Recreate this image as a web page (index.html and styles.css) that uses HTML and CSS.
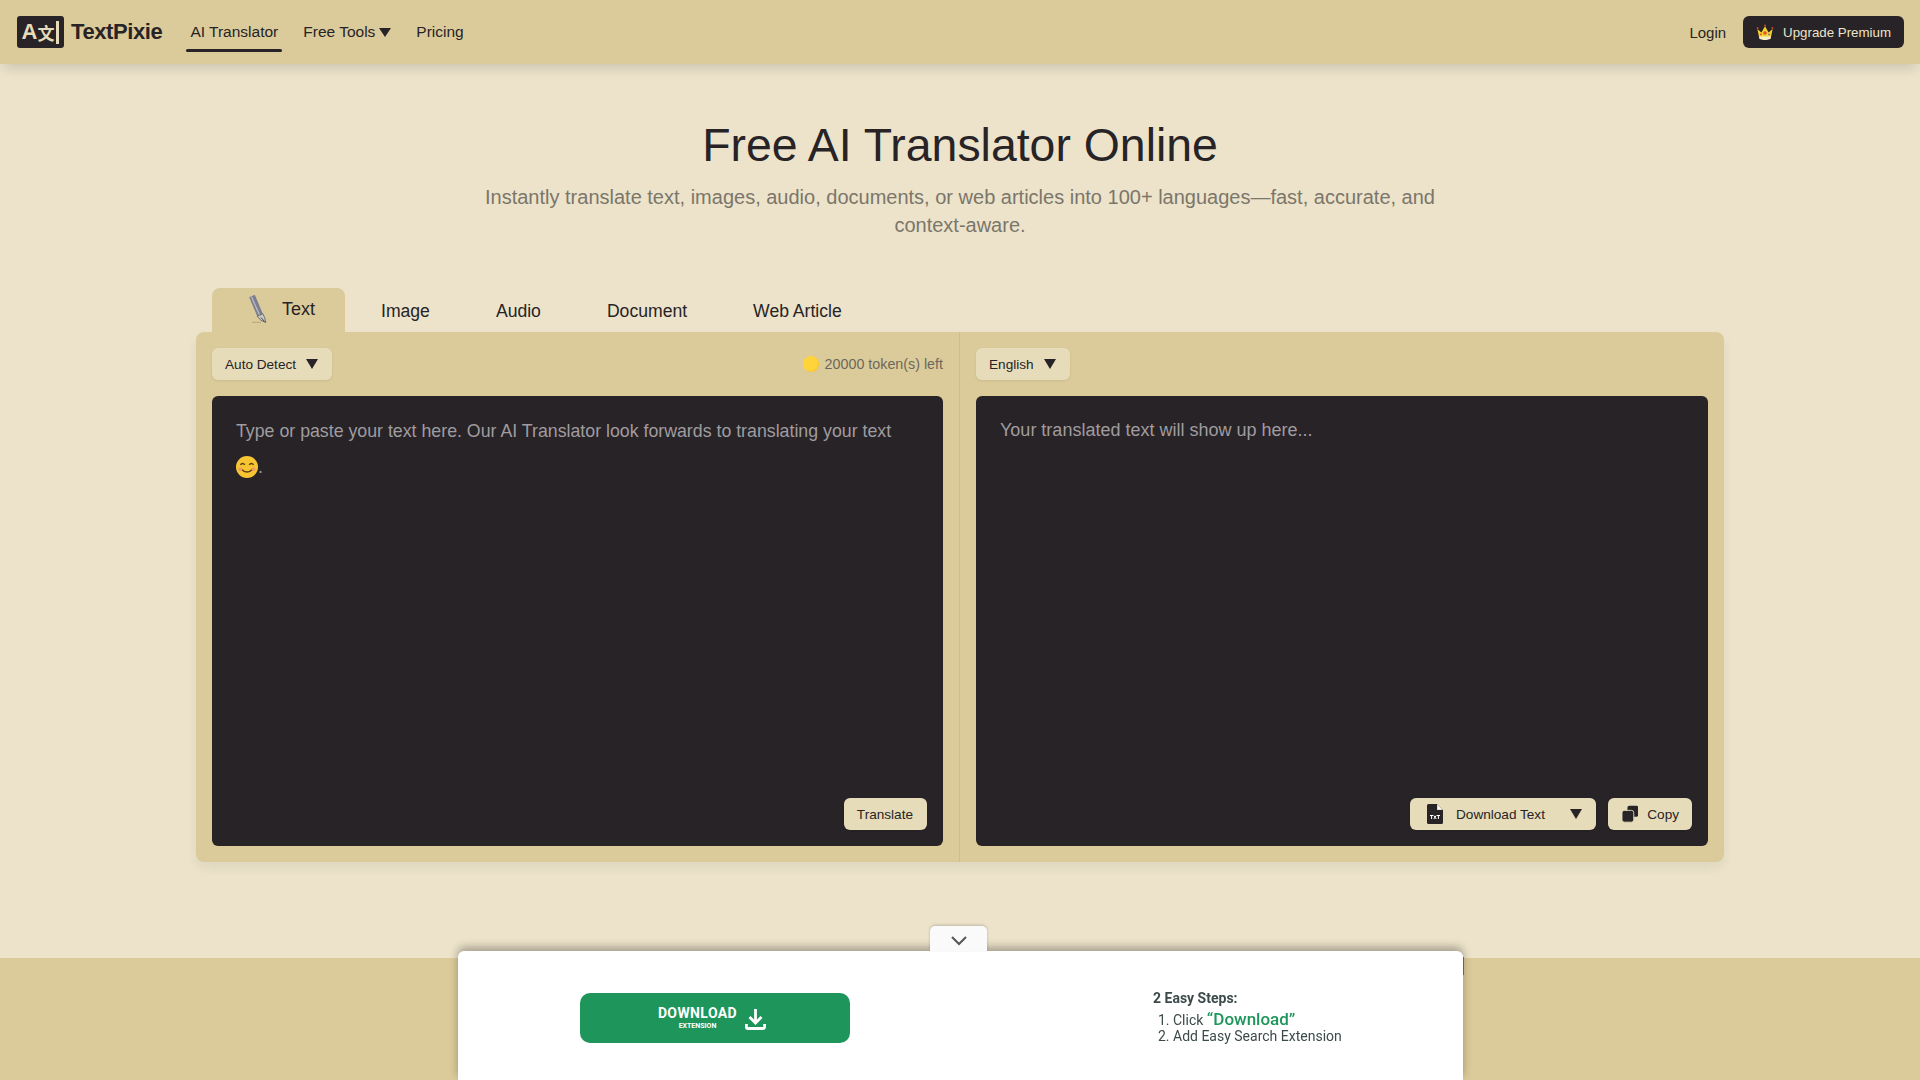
FILE: index.html
```html
<!DOCTYPE html>
<html lang="en">
<head>
    <meta charset="UTF-8">
    <meta name="viewport" content="width=device-width, initial-scale=1.0">
    <title>Free AI Translator Online</title>
    <link rel="stylesheet" href="styles.css">
</head>
<body>
    <header class="topbar">
        <a class="logo" href="#">
            <span class="logo-mark"><span class="logo-a">A</span><span class="logo-zh">文</span><span class="logo-bar"></span></span>
            <span class="logo-name">TextPixie</span>
        </a>
        <nav class="nav">
            <a class="nav-link active" href="#">AI Translator</a>
            <a class="nav-link" href="#">Free Tools <svg class="caret-small" viewBox="0 0 12 9"><path d="M0 0h12L6 9z"/></svg></a>
            <a class="nav-link" href="#">Pricing</a>
        </nav>
        <a class="login" href="#">Login</a>
        <button class="upgrade" type="button">
            <svg class="crown" viewBox="0 0 20 18">
                <path d="M1.500 5l4.500 4 4-7 4 7 4.500-4-2 9.500h-13z" fill="#f8d030"/>
                <path d="M3.500 13.500h13v2.200c-3 2.200-10 2.200-13 0z" fill="#f5edc8"/>
                <circle cx="10" cy="9.500" r="2" fill="#e0542c"/>
                <circle cx="5.500" cy="11" r="1" fill="#c8452c"/>
                <circle cx="14.500" cy="11" r="1" fill="#3f7fc4"/>
                <circle cx="1.800" cy="4" r="1.100" fill="#c8452c"/>
                <circle cx="10" cy="1.300" r="1.100" fill="#c8452c"/>
                <circle cx="18.200" cy="4" r="1.100" fill="#c8452c"/>
            </svg>
            Upgrade Premium
        </button>
    </header>

    <main class="content">
        <h1>Free AI Translator Online</h1>
        <p class="lead">Instantly translate text, images, audio, documents, or web articles into 100+ languages—fast, accurate, and context-aware.</p>

        <div class="translator">
            <div class="tabs">
                <a class="tab tab-active" href="#">
                    <svg class="pen" viewBox="0 0 18 28">
                        <path d="M.2 2.200L5.800-.2l8 19-5.600 2.400z" fill="#7b7e8e"/>
                        <path d="M2.500 1.800l8 18.300" stroke="#b9bbc6" stroke-width="1.300"/>
                        <path d="M8.200 21.200l5.600-2.400 2 4 .9 4.700-5-2.400z" fill="#c9cac6" stroke="#55565a" stroke-width=".8"/>
                        <path d="M12 22.500l3.500 4" stroke="#3c3d40" stroke-width=".9"/>
                        <path d="M3 27.300h9" stroke="#b3a67f" stroke-width="1"/>
                    </svg>
                    Text
                </a>
                <a class="tab" href="#">Image</a>
                <a class="tab" href="#">Audio</a>
                <a class="tab" href="#">Document</a>
                <a class="tab" href="#">Web Article</a>
            </div>
            <div class="panel">
                <section class="side side-left">
                    <div class="side-top">
                        <button class="pill" type="button">Auto Detect <svg class="caret" viewBox="0 0 12 10"><path d="M0 0h12L6 10z"/></svg></button>
                        <span class="tokens"><span class="coin"></span>20000 token(s) left</span>
                    </div>
                    <div class="box">
                        <p class="placeholder placeholder-in">Type or paste your text here. Our AI Translator look forwards to translating your text
                            <span class="smile-wrap"><svg class="smile" viewBox="0 0 20 20">
                                <circle cx="10" cy="10" r="10" fill="#f7c532"/>
                                <path d="M4 8q2-2.500 4 0M12 8q2-2.500 4 0" fill="none" stroke="#5a3d12" stroke-width="1.300"/>
                                <path d="M4.500 11.500q5.500 6 11 0" fill="none" stroke="#5a3d12" stroke-width="1.300"/>
                                <circle cx="4" cy="12" r="1.800" fill="#f29a5c"/>
                                <circle cx="16" cy="12" r="1.800" fill="#f29a5c"/>
                            </svg>.</span></p>
                        <div class="box-actions">
                            <button class="pill" type="button">Translate</button>
                        </div>
                    </div>
                </section>
                <section class="side">
                    <div class="side-top">
                        <button class="pill" type="button">English <svg class="caret" viewBox="0 0 12 10"><path d="M0 0h12L6 10z"/></svg></button>
                    </div>
                    <div class="box">
                        <p class="placeholder placeholder-out">Your translated text will show up here...</p>
                        <div class="box-actions">
                            <button class="pill pill-download" type="button">
                                <svg class="file-icon" viewBox="0 0 16 20">
                                    <path d="M1.500 0H10l6 6v12.500a1.500 1.500 0 0 1-1.500 1.500h-13A1.500 1.500 0 0 1 0 18.500v-17A1.500 1.500 0 0 1 1.500 0z" fill="#272326"/>
                                    <path d="M10 0v6h6z" fill="#e6dcb9"/>
                                    <path d="M11 1.500L14.500 5H11z" fill="#fff"/>
                                    <path d="M3 11.500h3.200M4.600 11.500v3.500M6.800 11.500l2.400 3.500M9.200 11.500l-2.400 3.500M9.800 11.500H13M11.400 11.500v3.500" stroke="#fff" stroke-width="1" fill="none"/>
                                </svg>
                                <span class="download-label">Download Text</span>
                                <svg class="caret" viewBox="0 0 12 10"><path d="M0 0h12L6 10z"/></svg>
                            </button>
                            <button class="pill pill-copy" type="button">
                                <svg class="copy-icon" viewBox="0 0 18 18">
                                    <rect x="6" y="0" width="12" height="12" rx="2" fill="#272326"/>
                                    <rect x="0" y="5" width="13" height="13" rx="2.500" fill="#272326" stroke="#e6dcb9" stroke-width="1"/>
                                </svg>
                                Copy
                            </button>
                        </div>
                    </div>
                </section>
            </div>
        </div>
    </main>

    <div class="footer-band"></div>

    <aside class="promo">
        <button class="promo-toggle" type="button">
            <svg viewBox="0 0 16 10"><path d="M1 1l7 7 7-7" fill="none" stroke="#555" stroke-width="2"/></svg>
        </button>
        <div class="promo-left">
            <a class="promo-btn" href="#">
                <span class="promo-btn-text"><b>DOWNLOAD</b><small>EXTENSION</small></span>
                <svg class="promo-icon" viewBox="0 0 21 21">
                    <path d="M10.500 0v13.500M4.500 8l6 6 6-6" fill="none" stroke="#fff" stroke-width="2.800"/>
                    <path d="M1.400 15v3a1.500 1.500 0 0 0 1.500 1.500h15.200a1.500 1.500 0 0 0 1.500-1.500v-3" fill="none" stroke="#fff" stroke-width="2.800"/>
                </svg>
            </a>
        </div>
        <div class="promo-right">
            <strong>2 Easy Steps:</strong>
            <ol>
                <li>Click <span class="green">“Download”</span></li>
                <li class="step-last">Add Easy Search Extension</li>
            </ol>
        </div>
    </aside>
</body>
</html>
```

FILE: styles.css
```css
* {
    box-sizing: border-box;
}
html, body {
    height: 100%;
}
body {
    font-family: 'Liberation Sans', Arial, sans-serif;
    background-color: #ece3ca;
    margin: 0;
    color: #272326;
    overflow: hidden;
    display: flex;
    flex-direction: column;
}
a {
    color: inherit;
    text-decoration: none;
}
button {
    font-family: inherit;
    border: none;
    cursor: pointer;
}

/* top bar */
.topbar {
    height: 64px;
    flex: none;
    display: flex;
    align-items: center;
    padding: 0 16px 0 17px;
    background-color: #dbcb9a;
    box-shadow: 0 8px 12px -4px rgba(0,0,0,0.14);
    position: relative;
}
.logo {
    display: flex;
    align-items: center;
    gap: 7px;
}
.logo-mark {
    width: 47px;
    height: 32px;
    background-color: #272326;
    border-radius: 3px;
    color: #e6dcb9;
    display: flex;
    align-items: center;
    justify-content: center;
    font-weight: 700;
}
.logo-a {
    font-size: 22px;
}
.logo-zh {
    font-family: 'Noto Sans CJK SC', sans-serif;
    font-size: 17px;
    line-height: 1;
}
.logo-bar {
    width: 3px;
    height: 23px;
    margin-left: 2px;
    background-color: #e6dcb9;
}
.logo-name {
    font-size: 22px;
    font-weight: 700;
    letter-spacing: -0.4px;
}
.nav {
    display: flex;
    margin-left: 24px;
    gap: 17px;
    flex: 1;
    height: 100%;
}
.nav-link {
    font-size: 15.5px;
    height: 100%;
    padding: 0 4px;
    display: flex;
    align-items: center;
    gap: 4px;
    position: relative;
}
.nav-link.active::after {
    content: "";
    position: absolute;
    left: 0;
    right: 0;
    bottom: 12px;
    height: 3px;
    border-radius: 2px;
    background-color: #272326;
}
.caret-small {
    width: 12px;
    height: 9px;
    fill: #272326;
}
.login {
    font-size: 15px;
    margin-right: 17px;
}
.upgrade {
    height: 32px;
    padding: 0 13px;
    border-radius: 6px;
    background-color: #272326;
    color: #ece3ca;
    font-size: 13.3px;
    display: flex;
    align-items: center;
    gap: 9px;
}
.crown {
    width: 18px;
    height: 17px;
}

/* heading */
.content {
    flex: 1;
    text-align: center;
    padding-top: 53px;
}
h1 {
    margin: 0;
    font-size: 46.4px;
    line-height: 56px;
    font-weight: 400;
}
.lead {
    width: 1000px;
    margin: 10px auto 0;
    font-size: 20px;
    line-height: 28px;
    color: #7b766a;
}

/* translator */
.translator {
    width: 1528px;
    margin: 49px auto 0;
    text-align: left;
}
.tabs {
    display: flex;
    align-items: flex-end;
    height: 44px;
    padding-left: 16px;
    gap: 6px;
}
.tab {
    height: 100%;
    padding: 3px 30px 0;
    display: flex;
    align-items: center;
    font-size: 17.6px;
}
.tab-active {
    width: 133px;
    padding: 0 0 2px 37px;
    gap: 15px;
    background-color: #dbcb9a;
    border-radius: 8px 8px 0 0;
    font-size: 18px;
}
.pen {
    width: 18px;
    height: 28px;
    flex: none;
}
.panel {
    height: 530px;
    display: grid;
    grid-template-columns: 1fr 1fr;
    background-color: #dbcb9a;
    border-radius: 8px;
    box-shadow: 0 6px 12px rgba(0,0,0,0.06);
}
.side {
    padding: 16px;
    display: flex;
    flex-direction: column;
    gap: 16px;
}
.side-left {
    border-right: 1px solid #cdbd8f;
}
.side-top {
    height: 32px;
    display: flex;
    align-items: center;
    justify-content: space-between;
}
.pill {
    height: 32px;
    padding: 0 14px 0 13px;
    border-radius: 6px;
    background-color: #e6dcb9;
    color: #272326;
    font-size: 13.6px;
    display: flex;
    align-items: center;
    gap: 10px;
    box-shadow: 0 1px 3px rgba(0,0,0,0.08);
}
.caret {
    width: 12px;
    height: 10px;
    fill: #272326;
}
.tokens {
    font-size: 14.3px;
    color: #6d675a;
    display: flex;
    align-items: center;
    gap: 6px;
}
.coin {
    width: 16px;
    height: 16px;
    border-radius: 50%;
    background: radial-gradient(circle at 45% 45%, #ffd43b 55%, #f2a900 100%);
}
.box {
    flex: 1;
    background-color: #272326;
    border-radius: 6px;
    padding: 17px 24px;
    position: relative;
}
.placeholder {
    margin: 0;
    font-size: 18px;
    line-height: 36px;
    color: #a09ca0;
}
.placeholder-in {
    font-size: 17.75px;
}
.placeholder-out {
    line-height: 34px;
}
.smile-wrap {
    white-space: nowrap;
}
.smile {
    width: 22px;
    height: 22px;
    vertical-align: -5px;
}
.box-actions {
    position: absolute;
    right: 16px;
    bottom: 16px;
    display: flex;
    gap: 12px;
}
.pill-download {
    width: 186px;
    padding: 0 14px 0 17px;
    gap: 13px;
}
.download-label {
    flex: 1;
    text-align: left;
}
.file-icon {
    width: 16px;
    height: 20px;
}
.pill-copy {
    width: 84px;
    gap: 9px;
    padding: 0 13px 0 14px;
}
.copy-icon {
    width: 18px;
    height: 18px;
}

/* bottom band and promo popup */
.footer-band {
    height: 122px;
    flex: none;
    background-color: #dbcb9a;
}
.promo {
    position: fixed;
    left: 458px;
    bottom: 0;
    width: 1005px;
    height: 129px;
    background-color: #fff;
    border-radius: 6px 6px 0 0;
    box-shadow: 0 -4px 8px rgba(0,0,0,0.3);
    display: flex;
    font-family: 'Roboto', sans-serif;
}
.promo::after {
    content: "";
    position: absolute;
    right: -1px;
    top: 6px;
    width: 1px;
    height: 18px;
    background-color: #6b6450;
}
.promo-toggle {
    position: absolute;
    left: 472px;
    top: -25px;
    width: 57px;
    height: 25px;
    background-color: #fafafa;
    border-radius: 5px 5px 0 0;
    box-shadow: 0 -1px 3px rgba(0,0,0,0.2);
    padding: 0;
}
.promo-toggle svg {
    width: 16px;
    height: 10px;
    display: block;
    margin: 5px auto 0;
}
.promo-left {
    width: 695px;
    padding: 42px 0 0 122px;
}
.promo-btn {
    width: 270px;
    height: 50px;
    padding-right: 6px;
    border-radius: 10px;
    background-color: #1e955b;
    color: #fff;
    display: flex;
    align-items: center;
    justify-content: center;
    gap: 8px;
}
.promo-btn-text {
    display: flex;
    flex-direction: column;
    align-items: center;
}
.promo-btn-text b {
    font-size: 14px;
    line-height: 16px;
    letter-spacing: 0.4px;
}
.promo-btn-text small {
    font-size: 7px;
    line-height: 10px;
    font-weight: 700;
}
.promo-icon {
    width: 21px;
    height: 21px;
    margin-top: 2px;
}
.promo-right {
    padding-top: 39px;
    font-size: 14px;
    color: #3d4a4a;
    line-height: 17px;
}
.promo-right strong {
    display: block;
    margin-bottom: 4px;
}
.promo-right ol {
    margin: 0;
    padding-left: 20px;
}
.step-last {
    margin-top: -1px;
}
.green {
    color: #1e955b;
    font-size: 17px;
    font-weight: 500;
}
```
